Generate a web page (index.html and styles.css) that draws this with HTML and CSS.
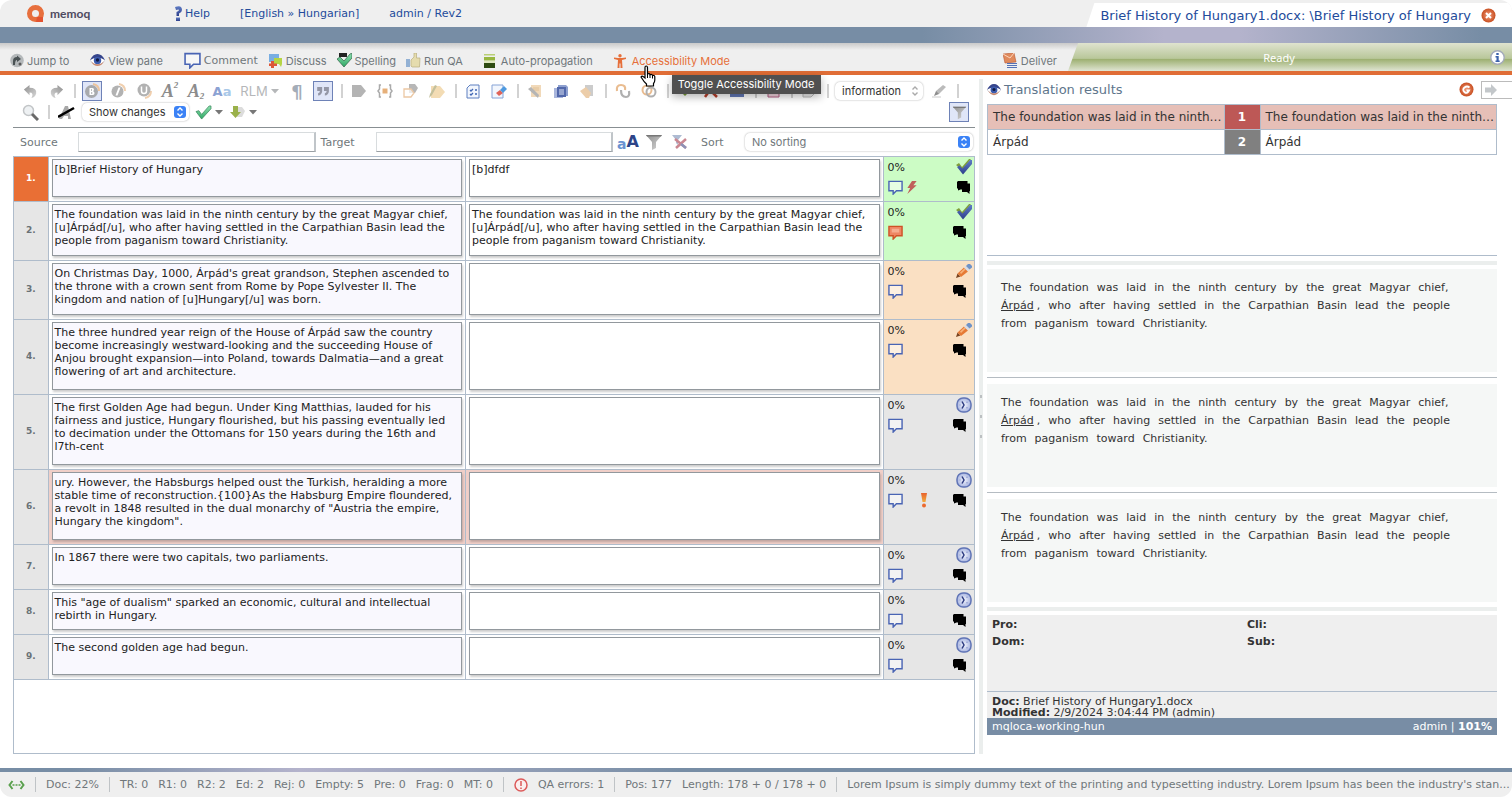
FILE: index.html
```html
<!DOCTYPE html>
<html lang="en">
  <head>
    <meta charset="UTF-8" />
    <meta name="viewport" content="width=device-width, initial-scale=1.0" />
    <title>memoQ - Brief History of Hungary1.docx</title>
    <link rel="stylesheet" href="styles.css">
  </head>
  <body>
    <!-- Shared icons -->
    <svg class="icon-defs" width="0" height="0" aria-hidden="true">
      <defs>
        <linearGradient id="g-blue" x1="0" y1="0" x2="0" y2="1"><stop offset="0" stop-color="#5f7cc4"/><stop offset="1" stop-color="#2d3f8c"/></linearGradient>
        <linearGradient id="g-grey" x1="0" y1="0" x2="1" y2="1"><stop offset="0" stop-color="#8e8e8e"/><stop offset="1" stop-color="#d8d8d8"/></linearGradient>
        <linearGradient id="g-green" x1="0" y1="0" x2="0" y2="1"><stop offset="0" stop-color="#8fe0b0"/><stop offset="1" stop-color="#2fa865"/></linearGradient>
        <linearGradient id="g-orange" x1="0" y1="0" x2="0" y2="1"><stop offset="0" stop-color="#e8622e"/><stop offset="1" stop-color="#f2ac3c"/></linearGradient>
        <radialGradient id="g-ball"><stop offset="0" stop-color="#f3a080"/><stop offset="1" stop-color="#c84e20"/></radialGradient>
        <radialGradient id="g-lilac"><stop offset="0" stop-color="#f4f6fd"/><stop offset="1" stop-color="#a9b5e0"/></radialGradient>
      </defs>
      <symbol id="i-comment" viewBox="0 0 16 16"><path d="M1 1.500h14v10H9l-3.500 3.500v-3.500H1z" fill="#fff" fill-opacity=".5" stroke="#4964b4" stroke-width="1.500"/></symbol>
      <symbol id="i-comment-red" viewBox="0 0 16 16"><path d="M1 1.500h14v10H9l-3.500 3.500v-3.500H1z" fill="#ee8663" stroke="#cf5226" stroke-width="1.500"/><path d="M4 4h8v4H4z" fill="#f6ad90"/></symbol>
      <symbol id="i-chat" viewBox="0 0 14 14"><path d="M1 1h9.500v2.500H13v7.500h-.500v3L10 12H5V9.500H3.500L1 10.500V8.500H0V2z" fill="#000"/></symbol>
      <symbol id="i-done" viewBox="0 0 16 16"><path d="M0 6l3-2 3 4L13 0l2 0-9 11z" fill="#7f9d3a"/><path d="M1 8l2.500-1.500L6.500 9.500 14 1h2v4L7 15.500z" fill="url(#g-blue)"/></symbol>
      <symbol id="i-pencil" viewBox="0 0 16 16"><path d="M0 15l1.500-4.500 3 3z" fill="#7a4420"/><path d="M1.500 10.500l6.500-6 4 4-7 5.500z" fill="#e67a35"/><path d="M4 9.500l5-4.500 1 1-5 5z" fill="#f7b27a"/><path d="M8 4.500L10 3l3.500 3.500-1.500 2z" fill="#d9dce4"/><path d="M10 3l2-2h2l2 2v1.500L13.500 6.500z" fill="#6f93c8"/></symbol>
      <symbol id="i-state" viewBox="0 0 16 16"><rect x="1" y="1" width="14" height="14" rx="6" fill="url(#g-lilac)" stroke="#6074b6" stroke-width="1.500"/><path d="M6 4.500l2 3.500-2 3.500" fill="none" stroke="#2c3a80" stroke-width="1.500"/><path d="M11 4.500v1.500M11 10v1.500M4 7.500v1" fill="none" stroke="#8d9bd0" stroke-width="1.200"/></symbol>
      <symbol id="i-bolt" viewBox="0 0 12 14"><path d="M6 0h5L7.500 4.500H11L1 14l3-6.500H1z" fill="#c0605a"/></symbol>
      <symbol id="i-bang" viewBox="0 0 8 15"><path d="M1 0h6L5.500 9h-3z" fill="url(#g-orange)"/><circle cx="4" cy="12.500" r="2" fill="#ec6a2e"/></symbol>
      <symbol id="i-eye" viewBox="0 0 16 14"><path d="M0 7Q3 1 8 1t8 6q-4 5-8 5T0 7z" fill="#fff" stroke="#a9aec4" stroke-width=".6"/><path d="M0 6.500Q3 0 8 0t8 6.500Q12 4 8 4T0 6.500z" fill="#36458c"/><circle cx="8" cy="7" r="4" fill="#3d5cae"/><circle cx="8" cy="6.500" r="1.800" fill="#101a44"/><path d="M1 8q3 5 7 5t7-5q-3 3-7 3T1 8z" fill="#c98a70"/></symbol>
      <symbol id="i-funnel" viewBox="0 0 18 18"><path d="M1 2h16l-6 7v6l-4 2V9z" fill="url(#g-grey)"/><path d="M1 2h16l-1 1.500H2z" fill="#777"/></symbol>
      <symbol id="i-updown" viewBox="0 0 10 12"><path d="M2.500 4.500L5 2l2.500 2.500M2.500 7.500L5 10l2.500-2.500" fill="none" stroke="currentColor" stroke-width="1.400"/></symbol>
      <symbol id="i-caret" viewBox="0 0 8 5"><path d="M0 0h8L4 4.500z" fill="currentColor"/></symbol>
      <symbol id="i-check" viewBox="0 0 18 16"><path d="M1 7l3-1 3 4 8-9 2 0v3L7 15z" fill="url(#g-green)" stroke="#2a7d50" stroke-width=".7"/></symbol>
      <symbol id="i-undo" viewBox="0 0 18 18"><path d="M2 7l6-5v3q8 0 7 6-1 4-5 5 3-6-2-6v3z" fill="url(#g-grey)"/></symbol>
    </svg>

    <header class="top-bar">
      <a class="brand" href="#">
        <svg width="19" height="19" viewBox="0 0 19 19"><path d="M9.500 1a8.500 8.500 0 108.500 8.500A8.500 8.500 0 009.500 1zm0 5a3.500 3.500 0 110 7 3.500 3.500 0 010-7z" fill="#e76f3d" fill-rule="evenodd"/><path d="M11 13h6v5h-7z" fill="#e35330"/></svg>
        <span>memoq</span>
      </a>
      <nav class="top-links">
        <a href="#"><svg width="8" height="15" viewBox="0 0 8 15"><path d="M0 1q7-2.500 7 3 0 2-3 3.500V10H1.500V6Q4 5 4 4T1 4z" fill="url(#g-blue)"/><path d="M1 11.500h4V15H1z" fill="url(#g-blue)"/></svg>Help</a>
        <a href="#">[English » Hungarian]</a>
        <a href="#">admin / Rev2</a>
      </nav>
      <div class="doc-tab">
        <span>Brief History of Hungary1.docx: \Brief History of Hungary</span>
        <button class="icon-button" aria-label="Close"><svg width="15" height="15" viewBox="0 0 15 15"><circle cx="7.500" cy="7.500" r="7" fill="url(#g-ball)"/><path d="M5 5l5 5M10 5l-5 5" stroke="#fff" stroke-width="2"/></svg></button>
      </div>
    </header>
    <div class="blue-strip"></div>

    <div class="menu-bar">
      <button class="menu-item"><svg width="14" height="15" viewBox="0 0 14 15"><circle cx="7" cy="7.500" r="6.800" fill="#b4b8ba"/><path d="M3 12V8q0-4 4-4V2.500l4 3.500-4 3V7Q5 7 5 12z" fill="#4a5254"/><circle cx="10" cy="11" r="1.500" fill="#59595a"/></svg>Jump to</button>
      <button class="menu-item view-item"><svg width="15" height="13"><use href="#i-eye"/></svg>View pane</button>
      <div class="menu-group">
        <button class="menu-item comment-item"><svg width="17" height="17"><use href="#i-comment"/></svg>Comment</button>
        <button class="menu-item"><svg width="15" height="15" viewBox="0 0 15 15"><path d="M1 1h10v8H1z" fill="#79aee2"/><path d="M6 5h8v6l-1 3-2-3H6z" fill="#b6d545"/><path d="M3 8h3v2.500h3v2.500H6v2H3v-2H1v-2.500h2z" fill="#dc5638"/></svg>Discuss</button>
        <button class="menu-item"><svg width="15" height="15" viewBox="0 0 15 15"><path d="M2 0h8v4H2z" fill="#222"/><path d="M0 6l3-2 4 4 6-7 2-1v5L7 14z" fill="url(#g-green)" stroke="#2f6045" stroke-width=".7"/></svg>Spelling</button>
        <button class="menu-item"><svg width="15" height="15" viewBox="0 0 15 15"><path d="M0 6h4v8H0z" fill="#93b1d4"/><path d="M5 7l3-3V0h2.500v5H14l-.500 9H6l-1-1z" fill="#e5dcae" stroke="#b9af7e" stroke-width=".7"/></svg>Run QA</button>
      </div>
      <button class="menu-item auto-item"><svg width="11" height="14" viewBox="0 0 11 14"><path d="M0 0h11v1.500H0z" fill="#b9cf74"/><path d="M0 3h11v3.500H0z" fill="#98b740"/><path d="M0 7h11v7H0z" fill="#2d4a10"/><path d="M0 7h11v2H0z" fill="#dfe8c0"/></svg>Auto-propagation</button>
      <button class="menu-item is-active"><svg width="12" height="14" viewBox="0 0 12 14"><circle cx="6" cy="1.700" r="1.700" fill="#e66f3a"/><path d="M0 3.500l4 .5h4l4-.5v1.500L8 6l.500 8H6.500V9.500h-1V14h-2L4 6 0 5z" fill="#e66f3a"/></svg>Accessibility Mode
        <span class="tooltip" role="tooltip">Toggle Accessibility Mode</span>
        <svg class="pointer" width="16" height="22" viewBox="0 0 16 22"><path d="M5 13V2.500q0-1.500 1.200-1.500T7.500 2.500V9q2-1 2.500.7 2-.8 2.500.8 2-.7 2.300 1.200V15q0 2-1.300 3.500V21H6.500v-2Q4 17 1 12q1-1.500 2.500-.2z" fill="#fff" stroke="#000" stroke-width="1.200"/><path d="M7.500 9v4M10 10v3M12.500 11v2.500" stroke="#000"/></svg>
      </button>
      <button class="menu-item deliver-item"><svg width="15" height="15" viewBox="0 0 15 15"><path d="M0 1l11-1 2 9-11 1z" fill="#e08a5c" stroke="#b9562d" stroke-width=".6"/><path d="M0 1l7 4 4-5" fill="none" stroke="#fbd5bd"/><path d="M4 10.500h10M4 12.500h10M4 14.500h10" stroke="#5571b5"/></svg>Deliver</button>
      <div class="ready-strip">
        <span>Ready</span>
        <button class="icon-button" aria-label="Information"><svg width="15" height="15" viewBox="0 0 15 15"><circle cx="7.500" cy="7.500" r="6.700" fill="#fff" stroke="#a4aabb" stroke-width="1.400"/><path d="M6.300 3h2.400v2H6.300zM5.500 6h3.200v4.500h1V12H5.500v-1.500h1v-3h-1z" fill="#3c62ac"/></svg></button>
      </div>
    </div>

    <main class="workspace">
      <section class="editor">
        <div class="toolbar">
          <button class="tool" aria-label="Undo"><svg width="17" height="17"><use href="#i-undo"/></svg></button>
          <button class="tool" aria-label="Redo"><svg class="mirror" width="17" height="17"><use href="#i-undo"/></svg></button>
          <i class="sep"></i>
          <button class="tool is-on" aria-label="Bold"><svg width="16" height="16" viewBox="0 0 16 16"><path d="M9 1q6 1 6 7" fill="none" stroke="#edc49c" stroke-width="2"/><circle cx="7.500" cy="8.500" r="6.500" fill="#a8aaad"/><path d="M5.500 5h3q1.500.2 1.500 1.800L9.200 8.200q1.300.5 1.300 2T9 12H5.500zM7 6.300v1.500h1V6.300zM7 9.300v1.500h1.300V9.300z" fill="#fff" fill-rule="evenodd"/></svg></button>
          <button class="tool" aria-label="Italic"><svg width="16" height="16" viewBox="0 0 16 16"><path d="M9 1q6 1 6 7" fill="none" stroke="#f0cfae" stroke-width="2"/><circle cx="7.500" cy="8.500" r="6" fill="#b2b2b2"/><path d="M8.500 4.500h2l-3 8H5.500z" fill="#fff"/></svg></button>
          <button class="tool" aria-label="Underline"><svg width="16" height="16" viewBox="0 0 16 16"><path d="M15 8q0 6-6 7" fill="none" stroke="#f0cfae" stroke-width="2"/><circle cx="8" cy="7" r="6.500" fill="#b2b2b2"/><path d="M5.500 3.500V8q0 2.500 2.500 2.500T10.500 8V3.500" fill="none" stroke="#fff" stroke-width="1.500"/></svg></button>
          <button class="tool script" aria-label="Superscript">A<sup>2</sup></button>
          <button class="tool script" aria-label="Subscript">A<sub>2</sub></button>
          <button class="tool case">A<span>a</span></button>
          <button class="tool rlm">RLM <svg width="8" height="5"><use href="#i-caret"/></svg></button>
          <button class="tool pilcrow" aria-label="Non-printing characters">¶</button>
          <button class="tool quotes is-on" aria-label="Quotation marks"><svg width="13" height="9" viewBox="0 0 14 10"><path d="M0 0h5.500v5Q5 9 1 9.500V7q2-.5 2-2.500H0zM7.500 0H13v5q-.5 4-4.500 4.500V7q2-.5 2-2.500h-3z" fill="#9497a6"/></svg></button>
          <i class="sep"></i>
          <button class="tool" aria-label="Insert tag"><svg width="16" height="14" viewBox="0 0 16 14"><path d="M1 1h9l5 6-5 6H1z" fill="#b4b4b4"/></svg></button>
          <button class="tool" aria-label="Tag list"><svg width="16" height="14" viewBox="0 0 16 14"><path d="M4 1H2.500v4L1 7l1.500 2v4H4M12 1h1.500v4L15 7l-1.500 2v4H12" fill="none" stroke="#aaa" stroke-width="1.500"/><path d="M5.500 4.500h5v5h-5z" fill="#e6b07a"/></svg></button>
          <button class="tool" aria-label="Copy tags"><svg width="16" height="14" viewBox="0 0 16 14"><path d="M6 0h6l3 4-3 5H6z" fill="#b7b7b7"/><path d="M1 5h7l3 4-3 4H1z" fill="#fff" fill-opacity=".7" stroke="#ecc8a4" stroke-width="1.300"/></svg></button>
          <button class="tool" aria-label="Edit tag"><svg width="18" height="15" viewBox="0 0 18 15"><path d="M3 2h9l5 6-5 6H3z" fill="#f3dcb4"/><path d="M1 14l1-4 5-9 2 1-5 9z" fill="#c3c09c"/></svg></button>
          <i class="sep"></i>
          <button class="tool" aria-label="Checklist"><svg width="14" height="15" viewBox="0 0 14 15"><path d="M4 1h9v13H1V4z" fill="#f2f6fd" stroke="#5d7fc0"/><path d="M4 6l1 1 2-2M4 10l1 1 2-2M9 6h2M9 10h2" fill="none" stroke="#4167b4" stroke-width="1.300"/></svg></button>
          <button class="tool" aria-label="Clear"><svg width="16" height="15" viewBox="0 0 16 15"><path d="M1 1h11v13H1z" fill="#f2f6fd" stroke="#86a3d6"/><path d="M5 9l4-3 3 3-4 3z" fill="#e06358"/><path d="M9 6l4-4 3 3-4 4z" fill="#4e9ae0"/></svg></button>
          <i class="sep"></i>
          <button class="tool" aria-label="Edit note"><svg width="16" height="15" viewBox="0 0 16 15"><path d="M4 1h10v12H4z" fill="#f1d9b9"/><path d="M6 4h6M6 6h6" stroke="#dfc096"/><path d="M1 5l3-2 8 8-1 3z" fill="#b5b5b5"/></svg></button>
          <button class="tool" aria-label="Copy source"><svg width="16" height="15" viewBox="0 0 16 15"><path d="M5 1h8l2 2v9H5z" fill="#8ea0cf"/><path d="M1 4h9v10H1z" fill="#a9b6dc"/><path d="M4 3h9v10H4z" fill="#5268ab"/><path d="M6 6h5M6 8h5M6 10h5" stroke="#dce3f4"/></svg></button>
          <button class="tool" aria-label="Paste"><svg width="16" height="15" viewBox="0 0 16 15"><path d="M6 1h8v11H6z" fill="#ccc"/><path d="M1 7l6-4 5 6-2 5H7z" fill="#eccda9"/></svg></button>
          <i class="sep"></i>
          <button class="tool" aria-label="Join segments"><svg width="16" height="16" viewBox="0 0 16 16"><path d="M2 8q-1-6 4-6t4 5" fill="none" stroke="#e9bc90" stroke-width="2.200"/><path d="M6 7q0 7 5 7 4 0 3-6" fill="none" stroke="#b0b0b0" stroke-width="2.200"/></svg></button>
          <button class="tool" aria-label="Link segments"><svg width="16" height="16" viewBox="0 0 16 16"><circle cx="6" cy="7" r="4.500" fill="none" stroke="#e9bc90" stroke-width="2"/><circle cx="10" cy="9" r="4.500" fill="none" stroke="#b0b0b0" stroke-width="2"/></svg></button>
          <i class="sep"></i>
          <button class="tool" aria-label="Confirm"><svg width="16" height="14" viewBox="0 0 16 14"><path d="M3 7h10l-5 5z" fill="#7ca03a"/></svg></button>
          <button class="tool" aria-label="Reject"><svg width="16" height="14" viewBox="0 0 16 14"><path d="M2 13l5-7 7 7" fill="none" stroke="#b8402c" stroke-width="2.500"/></svg></button>
          <button class="tool" aria-label="Lock"><svg width="16" height="14" viewBox="0 0 16 14"><path d="M1 8h14v5H1z" fill="#6379b8"/></svg></button>
          <i class="sep"></i>
          <button class="tool" aria-label="Save"><svg width="16" height="14" viewBox="0 0 16 14"><path d="M3 5h11v8H3z" fill="#f3d6df" stroke="#b25e83"/></svg></button>
          <i class="sep"></i>
          <button class="tool" aria-label="Copy"><svg width="16" height="14" viewBox="0 0 16 14"><path d="M2 5h11v5l-3 3H2z" fill="#eee" stroke="#bbb"/></svg></button>
          <i class="sep"></i>
          <span class="select-box info-select"><select aria-label="Term category"><option>information</option></select><svg width="10" height="12"><use href="#i-updown"/></svg></span>
          <button class="tool" aria-label="Highlight"><svg width="16" height="16" viewBox="0 0 16 16"><path d="M5 8l7-6 3 2-7 7H5z" fill="#bbb"/><path d="M5 8l3 3-5 2z" fill="#8d8d8d"/><path d="M1 14h9" stroke="#ddd" stroke-width="1.500"/></svg></button>
          <i class="sep"></i>
        </div>

        <div class="toolbar second-toolbar">
          <button class="tool" aria-label="Find"><svg width="17" height="17" viewBox="0 0 17 17"><circle cx="6.500" cy="6.500" r="5" fill="#eef1f3" stroke="#c2c5c7" stroke-width="1.500"/><path d="M10 10l6 6" stroke="#696969" stroke-width="3"/></svg></button>
          <i class="sep"></i>
          <button class="tool" aria-label="Track changes"><svg width="17" height="16" viewBox="0 0 17 16"><path d="M1 15L7 2h3l3 13h-3v-3H6l-2 3z" fill="#a8a8a8"/><path d="M0 13L16 4" stroke="#000" stroke-width="2.500"/></svg></button>
          <span class="select-box changes-select"><select aria-label="Changes"><option>Show changes</option></select><svg class="blue-arrows" width="12" height="12"><use href="#i-updown"/></svg></span>
          <button class="tool drop" aria-label="Accept changes"><svg width="17" height="15"><use href="#i-check"/></svg><svg width="8" height="5"><use href="#i-caret"/></svg></button>
          <button class="tool drop" aria-label="Next change"><svg width="17" height="15" viewBox="0 0 17 15"><path d="M8 2h5l3 4-3 6H8z" fill="#dcdcdc"/><path d="M4 1h5v6h3l-5.500 6L1 7h3z" fill="#9ab14a"/></svg><svg width="8" height="5"><use href="#i-caret"/></svg></button>
          <button class="tool is-on filter-toggle" aria-label="Filter"><svg width="15" height="15"><use href="#i-funnel"/></svg></button>
        </div>

        <div class="filter-row">
          <label for="source-filter">Source</label>
          <input id="source-filter" type="text">
          <label for="target-filter">Target</label>
          <input id="target-filter" type="text">
          <div class="filter-icons">
            <button class="tool match-case" aria-label="Case sensitive"><small>a</small>A</button>
            <button class="tool" aria-label="Apply filter"><svg width="18" height="18"><use href="#i-funnel"/></svg></button>
            <button class="tool" aria-label="Clear filter"><svg width="16" height="16" viewBox="0 0 16 16"><path d="M0 1h10L6 6v5L4 9V6z" fill="#aebbd2"/><path d="M3 5l11 9M14 5L4 14" stroke="#ca8791" stroke-width="2.500"/><path d="M9 10l5 4" stroke="#8c93b8" stroke-width="2.500"/></svg></button>
          </div>
          <label for="sort">Sort</label>
          <span class="select-box sort-select"><select id="sort"><option>No sorting</option></select><svg class="blue-arrows" width="12" height="12"><use href="#i-updown"/></svg></span>
        </div>

        <div class="grid-box">
          <table class="segments">
            <colgroup><col class="col-number"><col><col><col class="col-state"></colgroup>
            <tbody>
              <tr class="done current">
                <th>1.</th>
                <td><div class="text source">[b]Brief History of Hungary</div></td>
                <td><div class="text">[b]dfdf</div></td>
                <td class="state">
                  <div><span>0%</span><svg width="16" height="16"><use href="#i-done"/></svg></div>
                  <div><svg width="15" height="15"><use href="#i-comment"/></svg><svg width="12" height="13"><use href="#i-bolt"/></svg><svg class="chat" width="14" height="14"><use href="#i-chat"/></svg></div>
                </td>
              </tr>
              <tr class="done">
                <th>2.</th>
                <td><div class="text source lines-3">The foundation was laid in the ninth century by the great Magyar chief, [u]Árpád[/u], who after having settled in the Carpathian Basin lead the people from paganism toward Christianity.</div></td>
                <td><div class="text lines-3">The foundation was laid in the ninth century by the great Magyar chief, [u]Árpád[/u], who after having settled in the Carpathian Basin lead the people from paganism toward Christianity.</div></td>
                <td class="state">
                  <div><span>0%</span><svg width="16" height="16"><use href="#i-done"/></svg></div>
                  <div><svg width="15" height="15"><use href="#i-comment-red"/></svg><svg class="chat" width="14" height="14"><use href="#i-chat"/></svg></div>
                </td>
              </tr>
              <tr class="edited">
                <th>3.</th>
                <td><div class="text source lines-3">On Christmas Day, 1000, Árpád's great grandson, Stephen ascended to the throne with a crown sent from Rome by Pope Sylvester II. The kingdom and nation of [u]Hungary[/u] was born.</div></td>
                <td><div class="text lines-3"></div></td>
                <td class="state">
                  <div><span>0%</span><svg width="16" height="16"><use href="#i-pencil"/></svg></div>
                  <div><svg width="15" height="15"><use href="#i-comment"/></svg><svg class="chat" width="14" height="14"><use href="#i-chat"/></svg></div>
                </td>
              </tr>
              <tr class="edited">
                <th>4.</th>
                <td><div class="text source lines-4">The three hundred year reign of the House of Árpád saw the country become increasingly westward-looking and the succeeding House of Anjou brought expansion—into Poland, towards Dalmatia—and a great flowering of art and architecture.</div></td>
                <td><div class="text lines-4"></div></td>
                <td class="state">
                  <div><span>0%</span><svg width="16" height="16"><use href="#i-pencil"/></svg></div>
                  <div><svg width="15" height="15"><use href="#i-comment"/></svg><svg class="chat" width="14" height="14"><use href="#i-chat"/></svg></div>
                </td>
              </tr>
              <tr>
                <th>5.</th>
                <td><div class="text source lines-4">The first Golden Age had begun. Under King Matthias, lauded for his fairness and justice, Hungary flourished, but his passing eventually led to decimation under the Ottomans for 150 years during the 16th and l7th-cent</div></td>
                <td><div class="text lines-4"></div></td>
                <td class="state">
                  <div><span>0%</span><svg width="16" height="16"><use href="#i-state"/></svg></div>
                  <div><svg width="15" height="15"><use href="#i-comment"/></svg><svg class="chat" width="14" height="14"><use href="#i-chat"/></svg></div>
                </td>
              </tr>
              <tr class="warning">
                <th>6.</th>
                <td><div class="text source lines-4">ury. However, the Habsburgs helped oust the Turkish, heralding a more stable time of reconstruction.{100}As the Habsburg Empire floundered, a revolt in 1848 resulted in the dual monarchy of "Austria the empire, Hungary the kingdom".</div></td>
                <td><div class="text lines-4"></div></td>
                <td class="state">
                  <div><span>0%</span><svg width="16" height="16"><use href="#i-state"/></svg></div>
                  <div><svg width="15" height="15"><use href="#i-comment"/></svg><svg class="bang" width="8" height="15"><use href="#i-bang"/></svg><svg class="chat" width="14" height="14"><use href="#i-chat"/></svg></div>
                </td>
              </tr>
              <tr>
                <th>7.</th>
                <td><div class="text source">In 1867 there were two capitals, two parliaments.</div></td>
                <td><div class="text"></div></td>
                <td class="state">
                  <div><span>0%</span><svg width="16" height="16"><use href="#i-state"/></svg></div>
                  <div><svg width="15" height="15"><use href="#i-comment"/></svg><svg class="chat" width="14" height="14"><use href="#i-chat"/></svg></div>
                </td>
              </tr>
              <tr>
                <th>8.</th>
                <td><div class="text source">This "age of dualism" sparked an economic, cultural and intellectual rebirth in Hungary.</div></td>
                <td><div class="text"></div></td>
                <td class="state">
                  <div><span>0%</span><svg width="16" height="16"><use href="#i-state"/></svg></div>
                  <div><svg width="15" height="15"><use href="#i-comment"/></svg><svg class="chat" width="14" height="14"><use href="#i-chat"/></svg></div>
                </td>
              </tr>
              <tr>
                <th>9.</th>
                <td><div class="text source">The second golden age had begun.</div></td>
                <td><div class="text"></div></td>
                <td class="state">
                  <div><span>0%</span><svg width="16" height="16"><use href="#i-state"/></svg></div>
                  <div><svg width="15" height="15"><use href="#i-comment"/></svg><svg class="chat" width="14" height="14"><use href="#i-chat"/></svg></div>
                </td>
              </tr>
            </tbody>
          </table>
        </div>
      </section>

      <div class="splitter"><i></i><i></i><i></i></div>

      <aside class="results">
        <div class="results-head">
          <svg width="14" height="12"><use href="#i-eye"/></svg>
          <h2>Translation results</h2>
          <button class="icon-button" aria-label="Refresh"><svg width="15" height="15" viewBox="0 0 15 15"><circle cx="7.500" cy="7.500" r="7" fill="url(#g-ball)"/><path d="M10.500 5.500Q8 3.500 5.500 5.500T5.500 10 10 8.500H7.500" fill="none" stroke="#fff" stroke-width="1.800"/></svg></button>
          <button class="expand" aria-label="Expand"><svg width="14" height="12" viewBox="0 0 14 12"><path d="M1 3.500h6V0l6 6-6 6V8.500H1z" fill="#c3c7ca"/></svg></button>
        </div>
        <div class="hits-box">
          <table class="hits">
            <colgroup><col><col class="col-rank"><col></colgroup>
            <tr class="selected"><td>The foundation was laid in the ninth…</td><th>1</th><td>The foundation was laid in the ninth…</td></tr>
            <tr><td>Árpád</td><th>2</th><td>Árpád</td></tr>
          </table>
        </div>
        <div class="divider"></div>
        <div class="previews">
          <p>
            <span>The</span> <span>foundation</span> <span>was</span> <span>laid</span> <span>in</span> <span>the</span> <span>ninth</span> <span>century</span> <span>by</span> <span>the</span> <span>great</span> <span>Magyar</span> <span>chief,</span>
            <span><u>Árpád</u>,</span> <span>who</span> <span>after</span> <span>having</span> <span>settled</span> <span>in</span> <span>the</span> <span>Carpathian</span> <span>Basin</span> <span>lead</span> <span>the</span> <span>people</span>
            <span>from</span> <span>paganism</span> <span>toward</span> <span>Christianity.</span>
          </p>
          <p>
            <span>The</span> <span>foundation</span> <span>was</span> <span>laid</span> <span>in</span> <span>the</span> <span>ninth</span> <span>century</span> <span>by</span> <span>the</span> <span>great</span> <span>Magyar</span> <span>chief,</span>
            <span><u>Árpád</u>,</span> <span>who</span> <span>after</span> <span>having</span> <span>settled</span> <span>in</span> <span>the</span> <span>Carpathian</span> <span>Basin</span> <span>lead</span> <span>the</span> <span>people</span>
            <span>from</span> <span>paganism</span> <span>toward</span> <span>Christianity.</span>
          </p>
          <p>
            <span>The</span> <span>foundation</span> <span>was</span> <span>laid</span> <span>in</span> <span>the</span> <span>ninth</span> <span>century</span> <span>by</span> <span>the</span> <span>great</span> <span>Magyar</span> <span>chief,</span>
            <span><u>Árpád</u>,</span> <span>who</span> <span>after</span> <span>having</span> <span>settled</span> <span>in</span> <span>the</span> <span>Carpathian</span> <span>Basin</span> <span>lead</span> <span>the</span> <span>people</span>
            <span>from</span> <span>paganism</span> <span>toward</span> <span>Christianity.</span>
          </p>
        </div>
        <div class="divider"></div>
        <div class="meta">
          <b>Pro:</b><b>Cli:</b>
          <b>Dom:</b><b>Sub:</b>
        </div>
        <div class="doc-info">
          <div><b>Doc:</b> Brief History of Hungary1.docx</div>
          <div><b>Modified:</b> 2/9/2024 3:04:44 PM (admin)</div>
        </div>
        <div class="memory"><span>mqloca-working-hun</span><span>admin | <b>101%</b></span></div>
      </aside>
    </main>

    <footer class="status-bar">
      <svg width="17" height="10" viewBox="0 0 17 10"><path d="M4.500 1L1.500 5l3 4M12.500 1l3 4-3 4" fill="none" stroke="#5aa04e" stroke-width="2"/><path d="M4.500 4.200h2v1.600h-2zM7.500 4.200h2v1.600h-2zM10.500 4.200h2v1.600h-2z" fill="#5aa04e"/></svg>
      <i class="bar"></i>
      <span>Doc: 22%</span>
      <i class="bar"></i>
      <span>TR: 0</span><span>R1: 0</span><span>R2: 2</span><span>Ed: 2</span><span>Rej: 0</span><span>Empty: 5</span><span>Pre: 0</span><span>Frag: 0</span><span>MT: 0</span>
      <i class="bar"></i>
      <svg width="14" height="14" viewBox="0 0 14 14"><circle cx="7" cy="7" r="6" fill="#fbeeee" stroke="#dc5a5a" stroke-width="1.500"/><path d="M7 3v5M7 9.500v1.500" stroke="#dc5a5a" stroke-width="1.500"/></svg>
      <span>QA errors: 1</span>
      <i class="bar"></i>
      <span>Pos: 177</span><span>Length: 178 + 0 / 178 + 0</span>
      <i class="bar"></i>
      <span class="context">Lorem Ipsum is simply dummy text of the printing and typesetting industry. Lorem Ipsum has been the industry's stan...</span>
    </footer>
  </body>
</html>
```
FILE: styles.css
```css
* {
  box-sizing: border-box;
}

html {
  background: #fff;
}

body {
  margin: 0;
  min-height: 100vh;
  display: flex;
  flex-direction: column;
  overflow: hidden;
  border-radius: 12px;
  background: #fff;
  color: #333;
  font-family: Verdana, "DejaVu Sans", sans-serif;
  font-size: 11px;
}

button,
input,
select {
  font: inherit;
  color: inherit;
}

button {
  border: 0;
  padding: 0;
  background: none;
}

a {
  color: #234b9b;
  text-decoration: none;
}

svg {
  flex: none;
  display: block;
}

.icon-defs {
  position: absolute;
}

.mirror {
  transform: scaleX(-1);
}

/* Header */
.top-bar {
  display: flex;
  align-items: center;
  height: 27px;
  background: #efefef;
}

.brand {
  display: flex;
  align-items: center;
  gap: 5px;
  width: 175px;
  padding-left: 26px;
  color: #4d4a60;
  font-family: Lato, sans-serif;
  font-size: 12px;
  font-weight: bold;
}

.top-links {
  display: flex;
  gap: 30px;
}

.top-links a {
  display: flex;
  align-items: center;
  gap: 2px;
}

.doc-tab {
  display: flex;
  align-items: center;
  gap: 10px;
  align-self: flex-end;
  height: 24px;
  margin-left: auto;
  padding: 0 16px 0 14px;
  background: #fff;
  color: #234b9b;
  font-size: 13px;
  clip-path: polygon(8px 0, 100% 0, 100% 100%, 0 100%);
}

.blue-strip {
  height: 16px;
  background: linear-gradient(90deg, #778da5 61%, #b4b3cc 77%, #b4b3cc 82%, #778da5 98%);
}

/* Menu */
.menu-bar {
  display: flex;
  align-items: center;
  gap: 21px;
  height: 32px;
  padding-left: 10px;
  border-bottom: 4px solid #e06d36;
  background: linear-gradient(#c9c9c9, #efefef 7px);
}

.menu-group {
  display: flex;
  gap: 10px;
}

.menu-item {
  position: relative;
  display: flex;
  align-items: center;
  gap: 3px;
  padding-top: 7px;
  color: #6f777b;
  font-family: Inter, sans-serif;
  white-space: nowrap;
}

.comment-item {
  font-family: Verdana, "DejaVu Sans", sans-serif;
}

.auto-item,
.is-active {
  gap: 6px;
}

.is-active {
  color: #e66f3a;
}

.tooltip {
  position: absolute;
  top: 28px;
  left: 58px;
  z-index: 2;
  padding: 0 6px;
  background: #505050;
  box-shadow: 0 3px 8px rgba(0, 0, 0, 0.3);
  color: #fff;
  line-height: 19px;
}

.pointer {
  position: absolute;
  top: 18px;
  left: 26px;
  z-index: 3;
}

.deliver-item {
  margin-left: auto;
}

.ready-strip {
  display: flex;
  align-items: center;
  flex: 0 0 444px;
  height: 28px;
  margin-left: -10px;
  padding-right: 7px;
  background: linear-gradient(#dfe3cf, #b9c79a 55%, #9db071 58%, #e0e5d3);
  clip-path: polygon(10px 0, 100% 0, 100% 100%, 0 100%);
  color: #fff;
  font-family: "Noto Sans", sans-serif;
}

.ready-strip span {
  flex: 1;
  text-align: center;
}

/* Workspace */
.workspace {
  flex: 1;
  display: grid;
  grid-template-columns: minmax(0, 962fr) 4px minmax(0, 510fr);
  column-gap: 4px;
  padding: 4px 15px 14px 13px;
}

.editor {
  display: flex;
  flex-direction: column;
}

.toolbar {
  display: flex;
  align-items: center;
  gap: 6px;
  margin-top: 2px;
  padding-left: 7px;
}

.second-toolbar {
  margin-top: 1px;
  padding-right: 6px;
  padding-bottom: 5px;
  border-bottom: 1px solid #888f92;
}

.tool {
  display: flex;
  align-items: center;
  justify-content: center;
  flex: none;
  width: 20px;
  height: 20px;
  color: #b5b7b9;
}

.is-on {
  border: 1px solid #6e82b7;
  background: #e0e6f8;
}

.sep {
  flex: none;
  width: 4px;
  height: 14px;
  border-right: 2px solid #d2d2d2;
}

.script {
  font-family: "Liberation Serif", serif;
  font-size: 18px;
  font-style: italic;
  font-weight: bold;
  line-height: 18px;
  color: #8c8c8c;
}

.script sup,
.script sub {
  align-self: flex-start;
  font-size: 9px;
  line-height: 9px;
}

.script sub {
  align-self: flex-end;
}

.case {
  color: #8ba2d3;
  font-size: 13px;
  font-weight: bold;
}

.case span {
  color: #a9c8e8;
}

.rlm {
  gap: 3px;
  width: 43px;
  font-family: Inter, sans-serif;
  font-size: 13px;
}

.pilcrow {
  color: #a4adb8;
  font-size: 18px;
  font-weight: bold;
}

.drop {
  gap: 3px;
  width: 28px;
  color: #777;
}

.filter-toggle {
  margin-left: auto;
}

.select-box {
  position: relative;
  display: flex;
  flex: none;
  height: 18px;
  border-radius: 5px;
  background: #fff;
  box-shadow: 0 0 2px rgba(0, 0, 0, 0.35);
  color: #333;
  font-family: Inter, sans-serif;
}

.select-box select {
  width: 100%;
  padding: 0 20px 0 7px;
  border: 0;
  background: none;
  appearance: none;
}

.select-box svg {
  position: absolute;
  top: 3px;
  right: 3px;
  color: #aaa;
  pointer-events: none;
}

.select-box .blue-arrows {
  border-radius: 3px;
  background: #3b82f6;
  color: #fff;
}

.info-select {
  width: 88px;
}

.changes-select {
  width: 107px;
}

.sort-select {
  width: 228px;
  color: #6f777b;
}

.filter-row {
  display: flex;
  align-items: center;
  height: 28px;
  padding: 0 2px 0 7px;
  color: #6f777b;
}

.filter-row label {
  flex: none;
  width: 58px;
}

.filter-row input {
  flex: 1;
  min-width: 0;
  height: 20px;
  border: 1px solid #d8dcde;
  border-right: 2px solid #c0c5c9;
  border-bottom-color: #9aa0a4;
  background: #fff;
}

.filter-row input + label {
  width: 60px;
  padding-left: 5px;
}

.filter-row .filter-icons + label {
  width: 44px;
}

.filter-icons {
  display: flex;
  gap: 6px;
  padding: 0 11px 0 5px;
}

.match-case {
  align-items: flex-end;
  color: #2d4488;
  font-size: 16px;
  font-weight: bold;
  line-height: 20px;
}

.match-case small {
  color: #6a93d2;
  font-size: 14px;
  line-height: 16px;
}

/* Segment grid */
.grid-box {
  flex: 1;
  border: 1px solid #afbccb;
}

.segments {
  width: 100%;
  border-collapse: collapse;
  table-layout: fixed;
}

.col-number {
  width: 34px;
}

.col-state {
  width: 91px;
}

.segments th,
.segments td {
  padding: 2px 3px 4px;
  border: 1px solid #afbccb;
}

.segments tr:first-child > * {
  border-top: 0;
}

.segments tr > :first-child {
  border-left: 0;
}

.segments tr > :last-child {
  border-right: 0;
}

.segments th {
  background: #e6e6e6;
  color: #6a7276;
  font-size: 9px;
}

.segments .current th {
  background: #e96f35;
  color: #fff;
}

.text {
  height: 38px;
  padding: 3px 2px;
  border: 1px solid #92989d;
  background: #fff;
  box-shadow: 1px 2px 2px rgba(0, 0, 0, 0.2);
  color: #222;
  line-height: 13px;
}

.lines-3 {
  height: 52px;
}

.lines-4 {
  height: 68px;
}

.source {
  background: #f9f8fe;
}

.warning td {
  background: #f0cfc8;
}

.segments .state {
  padding: 2px 2px 0 4px;
  background: #e6e6e6;
  color: #222;
  vertical-align: top;
}

.segments .done .state {
  background: #ccfcc5;
}

.segments .edited .state {
  background: #fae0c3;
}

.state div {
  display: flex;
  align-items: center;
  gap: 3px;
  height: 16px;
}

.state div + div {
  height: 20px;
  padding: 4px 5px 0 0;
}

.state span {
  flex: 1;
}

.current .state div + div {
  padding-right: 1px;
}

.chat {
  margin-left: auto;
}

.bang {
  margin-left: 14px;
}

.splitter {
  display: flex;
  flex-direction: column;
  align-items: center;
  justify-content: center;
  gap: 17px;
  background: #ebeeed;
}

.splitter i {
  width: 2px;
  height: 3px;
  background: #bcc0c2;
}

/* Results pane */
.results-head {
  display: flex;
  align-items: center;
  gap: 3px;
  height: 25px;
  margin-right: -15px;
  padding-bottom: 4px;
}

.results-head h2 {
  flex: 1;
  margin: 0;
  color: #60768c;
  font-size: 13px;
  font-weight: normal;
}

.expand {
  width: 31px;
  height: 18px;
  margin-left: 4px;
  padding-left: 2px;
  border: 1px solid #bbb;
  border-right: 0;
}

.hits-box {
  height: 152px;
  border-bottom: 1px solid #afbccb;
}

.hits {
  width: 100%;
  border-collapse: collapse;
  table-layout: fixed;
  font-size: 12px;
}

.col-rank {
  width: 36px;
}

.hits td,
.hits th {
  height: 25px;
  padding: 0 1px 0 5px;
  border: 1px solid #afbccb;
  overflow: hidden;
  white-space: nowrap;
  text-overflow: ellipsis;
}

.hits th {
  padding: 0;
  background: #808080;
  color: #fff;
}

.hits .selected td {
  background: #e6bfb7;
}

.hits .selected th {
  background: #bd5856;
}

.divider {
  height: 4px;
  margin: 5px 0 4px;
  background: #ebeeed;
}

.previews p {
  position: relative;
  display: flex;
  flex-wrap: wrap;
  align-content: flex-start;
  column-gap: 8px;
  height: 103px;
  margin: 0;
  padding: 10px 40px 0 14px;
  background: #f5f7f6;
  line-height: 18px;
}

.previews u {
  margin-right: 3px;
}

.previews p + p {
  margin-top: 12px;
}

.previews p + p::before {
  content: "";
  position: absolute;
  top: -7px;
  left: 0;
  right: 0;
  border-top: 1px solid #b5bcc2;
}

.meta {
  display: grid;
  grid-template-columns: 1fr 1fr;
  grid-auto-rows: 17px;
  height: 77px;
  padding-top: 1px;
  border-bottom: 1px solid #afbccb;
  background: #efefef;
  line-height: 17px;
}

.meta b {
  padding-left: 5px;
}

.doc-info {
  padding: 4px 5px 0;
  background: #efefef;
  line-height: 11px;
}

.memory {
  display: flex;
  justify-content: space-between;
  padding: 0 5px;
  background: #788da5;
  color: #fff;
  line-height: 17px;
}

/* Status bar */
.status-bar {
  display: flex;
  align-items: center;
  gap: 10px;
  height: 29px;
  padding-left: 8px;
  border-top: 4px solid #778da5;
  border-image: linear-gradient(90deg, #778da5 5%, #b4b3cc 20%, #778da5 45%) 4;
  background: #efefef;
  color: #6f777b;
  white-space: nowrap;
}

.bar {
  flex: none;
  width: 1px;
  height: 15px;
  background: #bfc3c6;
}

.context {
  flex: 1;
}
```
